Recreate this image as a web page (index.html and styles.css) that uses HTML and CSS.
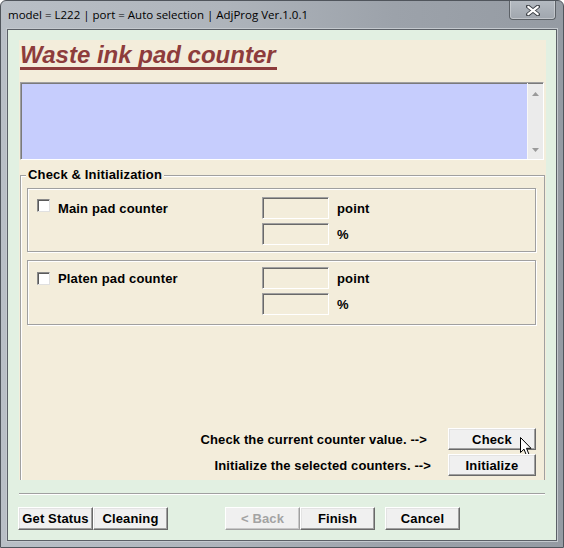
FILE: index.html
```html
<!DOCTYPE html>
<html>
<head>
<meta charset="utf-8">
<title>Waste ink pad counter</title>
<link rel="stylesheet" href="styles.css">
</head>
<body>
<div class="window">
  <div class="titlebar">
    <span class="title">model = L222 | port = Auto selection | AdjProg Ver.1.0.1</span>
    <div class="close">
      <svg width="14" height="11" viewBox="0 0 14 11">
        <path d="M2 1.5 L12 9.5 M12 1.5 L2 9.5" stroke="#3b3f45" stroke-width="4" stroke-linecap="round"/>
        <path d="M2.3 1.8 L11.7 9.2 M11.7 1.8 L2.3 9.2" stroke="#ffffff" stroke-width="2.2" stroke-linecap="round"/>
      </svg>
    </div>
  </div>
  <div class="client">
    <div class="panel">
      <div class="heading">Waste ink pad counter</div>
      <div class="log">
        <div class="log-text"></div>
        <div class="vscroll">
          <svg width="7" height="4" viewBox="0 0 7 4"><path d="M0 4 L3.5 0 L7 4 Z" fill="#9a9a9a"/></svg>
          <svg width="7" height="4" viewBox="0 0 7 4"><path d="M0 0 L3.5 4 L7 0 Z" fill="#9a9a9a"/></svg>
        </div>
      </div>
      <div class="group">
        <div class="legend">Check &amp; Initialization</div>
        <div class="pad pad-main">
          <div class="pad-check"><span class="checkbox"></span><span class="pad-label">Main pad counter</span></div>
          <div class="pad-values">
            <span class="field"></span><span class="unit">point</span>
            <span class="field"></span><span class="unit">%</span>
          </div>
        </div>
        <div class="pad pad-platen">
          <div class="pad-check"><span class="checkbox"></span><span class="pad-label">Platen pad counter</span></div>
          <div class="pad-values">
            <span class="field"></span><span class="unit">point</span>
            <span class="field"></span><span class="unit">%</span>
          </div>
        </div>
        <div class="actions">
          <div class="action-row">
            <span class="action-text text-check">Check the current counter value. --&gt;</span>
            <button class="btn btn-action btn-check">Check
              <svg class="cursor" width="13" height="20" viewBox="0 0 13 20"><path d="M0.5 0.5 L0.5 15.5 L4 12.2 L6.5 18.5 L9 17.4 L6.5 11.3 L11 11.3 Z" fill="#ffffff" stroke="#000000" stroke-width="1" stroke-linejoin="round"/></svg>
            </button>
          </div>
          <div class="action-row">
            <span class="action-text text-init">Initialize the selected counters. --&gt;</span>
            <button class="btn btn-action">Initialize</button>
          </div>
        </div>
      </div>
    </div>
    <div class="separator"></div>
    <div class="footer">
      <button class="btn">Get Status</button>
      <button class="btn">Cleaning</button>
      <button class="btn btn-back" disabled>&lt; Back</button>
      <button class="btn">Finish</button>
      <button class="btn btn-cancel">Cancel</button>
    </div>
  </div>
</div>
</body>
</html>
```

FILE: styles.css
```css
* { box-sizing: border-box; }
html, body { margin: 0; padding: 0; }
body {
  width: 564px;
  height: 548px;
  overflow: hidden;
  background: #ffffff;
  font-family: "Liberation Sans", Arial, sans-serif;
}

.window {
  width: 564px;
  height: 548px;
  display: flex;
  flex-direction: column;
  border: 1px solid #50555c;
  border-radius: 6px 6px 0 0;
  padding: 0 6px 6px 6px;
  background: linear-gradient(to right, #b9bfc6 0%, #aeb4bb 40%, #9ca2aa 70%, #959ba3 100%);
}

.titlebar {
  height: 28px;
  flex: none;
  display: flex;
  justify-content: space-between;
  align-items: flex-start;
}
.title {
  font-family: "Open Sans", "Noto Sans", sans-serif;
  font-size: 11.5px;
  line-height: 28px;
  color: #000000;
  padding-left: 1px;
  white-space: nowrap;
}
.close {
  width: 47px;
  height: 19px;
  margin-right: 1px;
  border: 1px solid #5c6167;
  border-top: none;
  border-radius: 0 0 4px 4px;
  background: linear-gradient(#b4bac1, #a0a6ae);
  box-shadow: inset 0 -1px 0 rgba(255,255,255,0.35), inset 1px 0 0 rgba(255,255,255,0.3), inset -1px 0 0 rgba(255,255,255,0.3);
  display: flex;
  align-items: center;
  justify-content: center;
}

.client {
  flex: 1;
  display: flex;
  flex-direction: column;
  border: 1px solid #5b6067;
  background: #e2f0e2;
  box-shadow: 0 0 0 1px #c4c9ce;
}

.panel {
  margin: 10px 10px 0 11px;
  height: 440px;
  flex: none;
  background: #f3eddb;
  display: flex;
  flex-direction: column;
}

.heading {
  width: fit-content;
  margin: 3px 0 0 1px;
  font-size: 24px;
  line-height: 24px;
  font-weight: bold;
  font-style: italic;
  color: #8d3c3c;
  border-bottom: 3px solid #8d3c3c;
  padding-right: 1px;
}

.log {
  margin: 12px 0 0 1px;
  width: 524px;
  height: 78px;
  flex: none;
  display: flex;
  border-top: 1px solid #a0a0a0;
  border-left: 1px solid #a0a0a0;
  border-right: 1px solid #ffffff;
  border-bottom: 1px solid #ffffff;
}
.log-text {
  flex: 1;
  background: #c6cdfd;
  box-shadow: inset 1px 1px 0 #7a7a7a;
}
.vscroll {
  width: 16px;
  background: #ebebeb;
  border-left: 1px solid #f8f8f8;
  box-shadow: inset 0 1px 0 #7a7a7a;
  display: flex;
  flex-direction: column;
  justify-content: space-between;
  align-items: center;
  padding: 9px 0 7px 0;
}

.group {
  flex: 1;
  margin: 15px 1px 0 1px;
  display: flex;
  flex-direction: column;
  border: 1px solid #a0a0a0;
  border-bottom: none;
  box-shadow: inset 1px 1px 0 #ffffff;
}
.legend {
  width: fit-content;
  margin: -9px 0 0 5px;
  padding: 0 2px;
  height: 16px;
  line-height: 16px;
  font-size: 13px;
  letter-spacing: 0.15px;
  font-weight: bold;
  color: #000000;
  background: #f3eddb;
}

.pad {
  display: flex;
  margin: 0 8px 0 6px;
  border: 1px solid #a0a0a0;
  box-shadow: inset 1px 1px 0 #ffffff, 1px 1px 0 #ffffff;
}
.pad-main { margin-top: 5px; height: 64px; }
.pad-platen { margin-top: 8px; height: 65px; }

.pad-check {
  width: 234px;
  display: flex;
  align-items: flex-start;
  gap: 8px;
  padding-left: 9px;
}
.pad-main .pad-check { padding-top: 10px; }
.pad-platen .pad-check { padding-top: 11px; }

.checkbox {
  width: 13px;
  height: 13px;
  flex: none;
  background: #ffffff;
  border: 1px solid;
  border-color: #8a8a8a #e0e0e0 #e0e0e0 #8a8a8a;
  box-shadow: inset 1px 1px 0 #5a5a5a;
}
.pad-label {
  font-size: 13px;
  line-height: 15px;
  letter-spacing: 0.15px;
  font-weight: bold;
  color: #000000;
  white-space: nowrap;
}
.pad-main .pad-label { margin-top: 2px; }
.pad-platen .pad-label { margin-top: -1px; }

.pad-values {
  display: grid;
  grid-template-columns: 67px auto;
  grid-auto-rows: 22px;
  column-gap: 8px;
  row-gap: 4px;
}
.pad-main .pad-values { padding-top: 8px; }
.pad-platen .pad-values { padding-top: 6px; }

.field {
  display: block;
  background: #f3eddb;
  border: 1px solid;
  border-color: #a0a0a0 #ffffff #ffffff #a0a0a0;
  box-shadow: inset 1px 1px 0 #696969;
}
.unit {
  font-size: 13px;
  line-height: 22px;
  padding-top: 1px;
  letter-spacing: 0.15px;
  font-weight: bold;
  color: #000000;
}

.actions {
  margin-top: auto;
  padding: 0 8px 4px 0;
  display: flex;
  flex-direction: column;
  gap: 4px;
}
.action-row {
  display: flex;
  justify-content: flex-end;
  align-items: center;
}
.action-text {
  font-size: 13px;
  letter-spacing: 0.12px;
  font-weight: bold;
  color: #000000;
  white-space: nowrap;
}
.text-check { margin-right: 21px; }
.text-init { margin-right: 17px; }

.btn {
  position: relative;
  width: 75px;
  height: 23px;
  padding: 0;
  margin: 0;
  font-family: "Liberation Sans", Arial, sans-serif;
  font-size: 13px;
  letter-spacing: 0.15px;
  font-weight: bold;
  color: #000000;
  background: #f0f0f0;
  border: 1px solid;
  border-color: #ffffff #696969 #696969 #ffffff;
  box-shadow: inset -1px -1px 0 #a0a0a0, inset 1px 1px 0 #e3e3e3;
  display: flex;
  align-items: center;
  justify-content: center;
  flex: none;
}
.btn-action { width: 88px; height: 22px; }
.btn-back {
  color: #a3a3a3;
  margin-left: 57px;
  border-color: #ffffff #a0a0a0 #a0a0a0 #ffffff;
  box-shadow: inset -1px -1px 0 #c8c8c8;
}
.btn-cancel { margin-left: 10px; }

.cursor {
  position: absolute;
  left: 71px;
  top: 8px;
}

.separator {
  margin: 13px 0 0 11px;
  width: 526px;
  height: 2px;
  flex: none;
  border-top: 1px solid #a0a0a0;
  border-bottom: 1px solid #ffffff;
}

.footer {
  display: flex;
  margin-top: 12px;
  padding-left: 10px;
}
```
